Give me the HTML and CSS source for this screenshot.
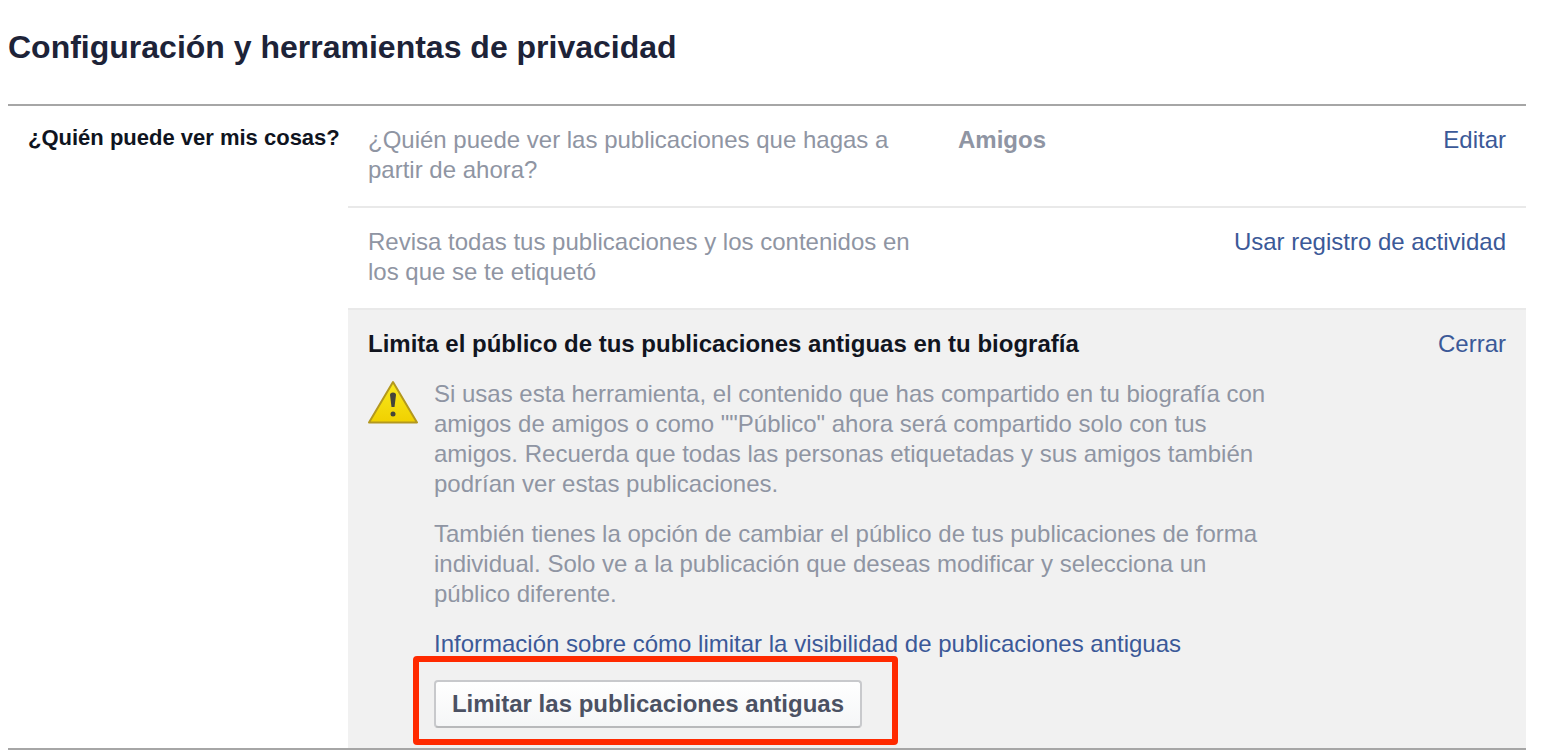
FILE: index.html
```html
<!DOCTYPE html>
<html lang="es">
  <head>
    <meta charset="UTF-8" />
    <meta name="viewport" content="width=device-width, initial-scale=1.0" />
    <title>Configuración y herramientas de privacidad</title>
    <link rel="stylesheet" href="styles.css">
  </head>
  <body>
    <h1 class="page-title">Configuración y herramientas de privacidad</h1>

    <div class="section">
      <div class="section-label">¿Quién puede ver mis cosas?</div>
      <div class="section-rows">
        <div class="setting">
          <div class="setting-text">¿Quién puede ver las publicaciones que hagas a partir de ahora?</div>
          <div class="setting-value">Amigos</div>
          <a class="setting-link" href="#">Editar</a>
        </div>
        <div class="setting">
          <div class="setting-text setting-text-wide">Revisa todas tus publicaciones y los contenidos en los que se te etiquetó</div>
          <a class="setting-link" href="#">Usar registro de actividad</a>
        </div>
        <div class="panel">
          <div class="panel-head">
            <div class="panel-title">Limita el público de tus publicaciones antiguas en tu biografía</div>
            <a class="setting-link" href="#">Cerrar</a>
          </div>
          <div class="panel-body">
            <svg class="warn-icon" width="52" height="48" viewBox="0 0 52 48">
              <defs>
                <linearGradient id="warnFill" x1="0" y1="0" x2="0" y2="1">
                  <stop offset="0" stop-color="#f9ea1e" />
                  <stop offset="1" stop-color="#f0d000" />
                </linearGradient>
              </defs>
              <path d="M25 3 L49 43.5 H1 Z" fill="url(#warnFill)" stroke="#b3981f" stroke-width="2" stroke-linejoin="round" />
              <path d="M22 16 Q22 13.5 25 13.5 Q28 13.5 28 16 L26.5 28 H23.5 Z" fill="#45453a" />
              <circle cx="25" cy="35" r="2.5" fill="#45453a" />
            </svg>
            <div class="panel-copy">
              <p>Si usas esta herramienta, el contenido que has compartido en tu biografía con amigos de amigos o como ""Público" ahora será compartido solo con tus amigos. Recuerda que todas las personas etiquetadas y sus amigos también podrían ver estas publicaciones.</p>
              <p>También tienes la opción de cambiar el público de tus publicaciones de forma individual. Solo ve a la publicación que deseas modificar y selecciona un público diferente.</p>
              <a class="info-link" href="#">Información sobre cómo limitar la visibilidad de publicaciones antiguas</a>
              <div class="action">
                <button class="limit-btn">Limitar las publicaciones antiguas</button>
                <div class="highlight"></div>
              </div>
            </div>
          </div>
        </div>
      </div>
    </div>
  </body>
</html>
```

FILE: styles.css
```css
body {
  margin: 0;
  height: 754px;
  overflow: hidden;
  background-color: #fff;
  font-family: "Liberation Sans", Arial, sans-serif;
  font-size: 24px;
  line-height: 30px;
  color: #8f95a3;
}

.page-title {
  margin: 0;
  padding: 27px 0 0 8px;
  height: 104px;
  box-sizing: border-box;
  font-size: 32px;
  line-height: 40px;
  font-weight: bold;
  color: #1d2338;
}

.section {
  display: grid;
  grid-template-columns: 340px 1178px;
  margin-left: 8px;
  width: 1518px;
  border-top: 2px solid #a6a6a6;
  border-bottom: 2px solid #a6a6a6;
}

.section-label {
  padding: 18px 0 0 20px;
  font-size: 22px;
  font-weight: bold;
  line-height: 28px;
  color: #0f1420;
  white-space: nowrap;
}

.setting {
  display: flex;
  justify-content: space-between;
  height: 102px;
  padding: 19px 20px 0;
  box-sizing: border-box;
  border-bottom: 2px solid #e9e9e9;
}

.setting-text {
  width: 530px;
}

.setting-text-wide {
  width: 560px;
}

.setting-value {
  flex: 1;
  margin-left: 60px;
  font-weight: bold;
}

.setting-link,
.info-link {
  color: #3b5998;
  text-decoration: none;
  white-space: nowrap;
}

.panel {
  height: 438px;
  padding: 19px 20px 0;
  box-sizing: border-box;
  background-color: #f1f1f1;
}

.panel-head {
  display: flex;
  justify-content: space-between;
}

.panel-title {
  font-weight: bold;
  color: #11151f;
}

.panel-body {
  display: flex;
  margin-top: 20px;
}

.warn-icon {
  flex: none;
  margin-right: 14px;
}

.panel-copy {
  width: 840px;
}

.panel-copy p {
  margin: 0 0 20px;
}

.action {
  position: relative;
  margin-top: 21px;
}

.limit-btn {
  display: block;
  width: 428px;
  height: 48px;
  padding: 0;
  border: 2px solid #c8c9cc;
  border-bottom-color: #b8b9bb;
  border-radius: 4px;
  background: linear-gradient(#fff, #f5f6f7);
  font-family: inherit;
  font-size: 24px;
  font-weight: bold;
  color: #4b5163;
}

.highlight {
  position: absolute;
  left: -21px;
  top: -24px;
  width: 473px;
  height: 77px;
  border: 6px solid #ff2a00;
  border-radius: 4px;
}
```
